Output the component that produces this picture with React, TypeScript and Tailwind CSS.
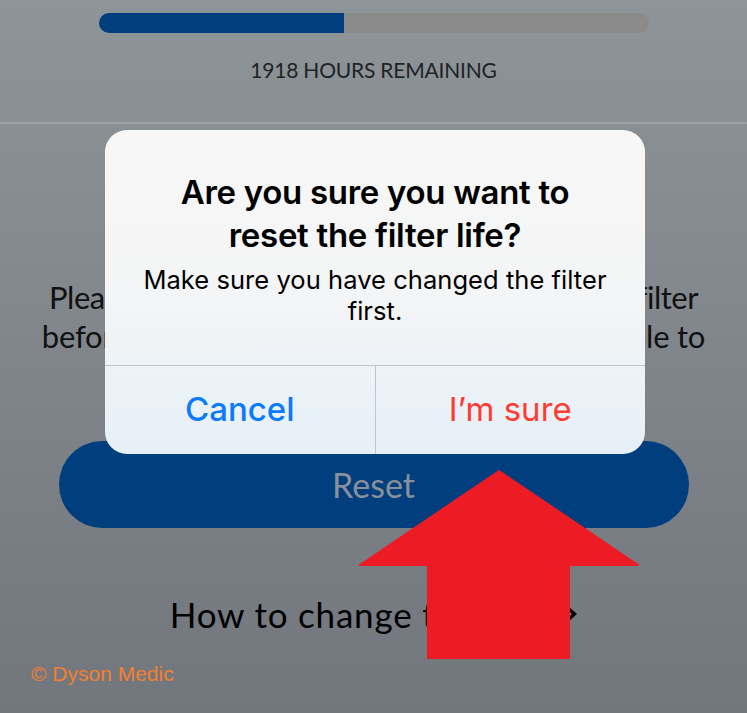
import React from 'react';

const futura = { fontFamily: 'Lato, "Noto Sans", sans-serif' };
const ios = { fontFamily: 'Inter, "Noto Sans", sans-serif' };

const hoursLeft = 1918;
const filterPct = 245 / 550;

// Big red pointer drawn over the screen
const PointerArrow: React.FC = () => (
  <svg className="absolute left-0 top-0 pointer-events-none" width={747} height={713}>
    <polygon
      points="499,471 638,565 569,565 569,658 428,658 428,565 360,565"
      fill="#ed1c24"
      stroke="#ed1c24"
      strokeWidth={2}
      strokeLinejoin="round"
    />
  </svg>
);

const ConfirmAlert: React.FC = () => (
  <div
    className="absolute left-[105px] top-[130px] w-[540px] rounded-[22px] overflow-hidden bg-gradient-to-b from-[#f7f7f7] via-[#f4f5f6] to-[#e6f0f8] flex flex-col"
    style={ios}
  >
    <div className="px-6 pt-[41px] pb-[39px] text-center text-black">
      <h2 className="text-[33px] leading-[43px] font-semibold tracking-[-0.3px]">
        Are you sure you want to
        <br />
        reset the filter life?
      </h2>
      <p className="mt-[7px] text-[25.5px] leading-[31px] tracking-[0.05px]">
        Make sure you have changed the filter
        <br />
        first.
      </p>
    </div>
    <div className="flex h-[89px] border-t border-[#b9c5d1]">
      <button className="flex-1 flex items-center justify-center text-[33px] font-medium text-[#0a7aff]">
        Cancel
      </button>
      <div className="w-px bg-[#b9c5d1]" />
      <button className="flex-1 flex items-center justify-center text-[33px] text-[#ff3b30]">
        I’m sure
      </button>
    </div>
  </div>
);

export default function App() {
  return (
    <div className="relative w-[747px] h-[713px] overflow-hidden bg-gradient-to-b from-[#8e9598] to-[#72767d]">
      {/* filter life gauge */}
      <div className="flex flex-col items-center pt-[13px]" style={futura}>
        <div className="w-[550px] h-[20px] rounded-full bg-[#8a8a8a] overflow-hidden">
          <div className="h-full bg-[#003e7e]" style={{ width: `${filterPct * 100}%` }} />
        </div>
        <div className="mt-[24px] text-[21px] leading-[26px] text-[#1f2326] tracking-[-0.2px]">
          {hoursLeft} HOURS REMAINING
        </div>
      </div>

      <div className="mt-[39px] h-[2px] bg-[#9ea2a5]" />

      <div className="flex flex-col items-center text-[#111]" style={futura}>
        <h3 className="mt-[94px] text-[31px] leading-[38px]">Reset the filter life</h3>
        <p className="mt-[22px] text-[31px] leading-[39px] text-center whitespace-nowrap">
          <span className="tracking-[-0.5px]">Please make sure that you have replaced the filter</span>
          <br />
          <span className="tracking-[-0.2px]">before resetting, otherwise you will not be able to</span>
        </p>

        <button className="mt-[85px] w-[630px] h-[87px] rounded-full bg-[#003e7e] text-[#8a9099] text-[34px]">
          Reset
        </button>

        <div className="mt-[66px] flex items-center gap-[6px] text-[35px] leading-[40px] tracking-[0.8px] text-black">
          <span>How to change the filter</span>
          <svg width={9} height={16} viewBox="0 0 9 16">
            <path d="M0 0 L9 8 L0 16 L0 12 L4 8 L0 4 Z" fill="#000" />
          </svg>
        </div>
      </div>

      <div
        className="absolute left-[31px] top-[658px] text-[21px] text-[#f47f2d]"
        style={{ fontFamily: '"Liberation Sans", Arial, sans-serif' }}
      >
        © Dyson Medic
      </div>

      <ConfirmAlert />
      <PointerArrow />
    </div>
  );
}
